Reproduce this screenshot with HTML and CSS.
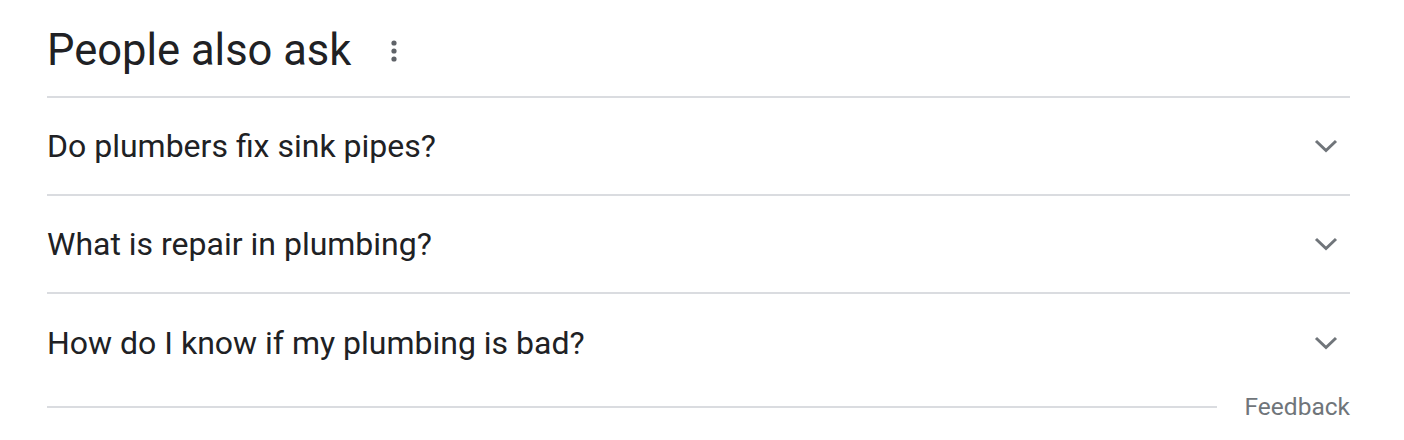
FILE: index.html
```html
<!DOCTYPE html>
<html>
<head>
<meta charset="utf-8">
<link rel="stylesheet" href="styles.css">
</head>
<body>
<div class="paa">
  <div class="header">
    <h2 class="title">People also ask</h2>
    <svg class="more" width="8" height="24" viewBox="0 0 8 24"><circle cx="4" cy="4" r="2.6" fill="#5f6368"/><circle cx="4" cy="12" r="2.6" fill="#5f6368"/><circle cx="4" cy="20" r="2.6" fill="#5f6368"/></svg>
  </div>
  <div class="list">
    <div class="item"><span class="q">Do plumbers fix sink pipes?</span><svg class="chev" width="24" height="14" viewBox="0 0 24 14"><path d="M2 2 L12 11.5 L22 2" fill="none" stroke="#70757a" stroke-width="3"/></svg></div>
    <div class="item"><span class="q">What is repair in plumbing?</span><svg class="chev" width="24" height="14" viewBox="0 0 24 14"><path d="M2 2 L12 11.5 L22 2" fill="none" stroke="#70757a" stroke-width="3"/></svg></div>
    <div class="item last"><span class="q">How do I know if my plumbing is bad?</span><svg class="chev" width="24" height="14" viewBox="0 0 24 14"><path d="M2 2 L12 11.5 L22 2" fill="none" stroke="#70757a" stroke-width="3"/></svg></div>
  </div>
  <div class="footer">
    <div class="rule"></div>
    <span class="feedback">Feedback</span>
  </div>
</div>
</body>
</html>
```
FILE: styles.css
```css
html, body { margin: 0; padding: 0; background: #fff; }
body { font-family: Roboto, "Open Sans", Arial, sans-serif; color: #202124; }
.paa { width: 1303px; margin-left: 47px; }
.header { display: flex; align-items: center; height: 98px; border-bottom: 2px solid #dadce0; box-sizing: border-box; }
.title { margin: 0; font-weight: 400; font-size: 43.5px; line-height: 52px; position: relative; top: 3px; }
.more { margin-left: 39px; position: relative; top: 3px; }
.item { display: flex; align-items: center; justify-content: space-between; height: 98px; border-bottom: 2px solid #dadce0; box-sizing: border-box; }
.item.last { border-bottom: none; height: 98px; }
.q { font-size: 32px; line-height: 40px; }
.chev { margin-right: 12px; }
.footer { display: flex; align-items: center; }
.rule { flex: 1; height: 2px; background: #dadce0; margin-right: 28px; }
.feedback { font-size: 24.5px; color: #70757a; line-height: 30px; }
```
